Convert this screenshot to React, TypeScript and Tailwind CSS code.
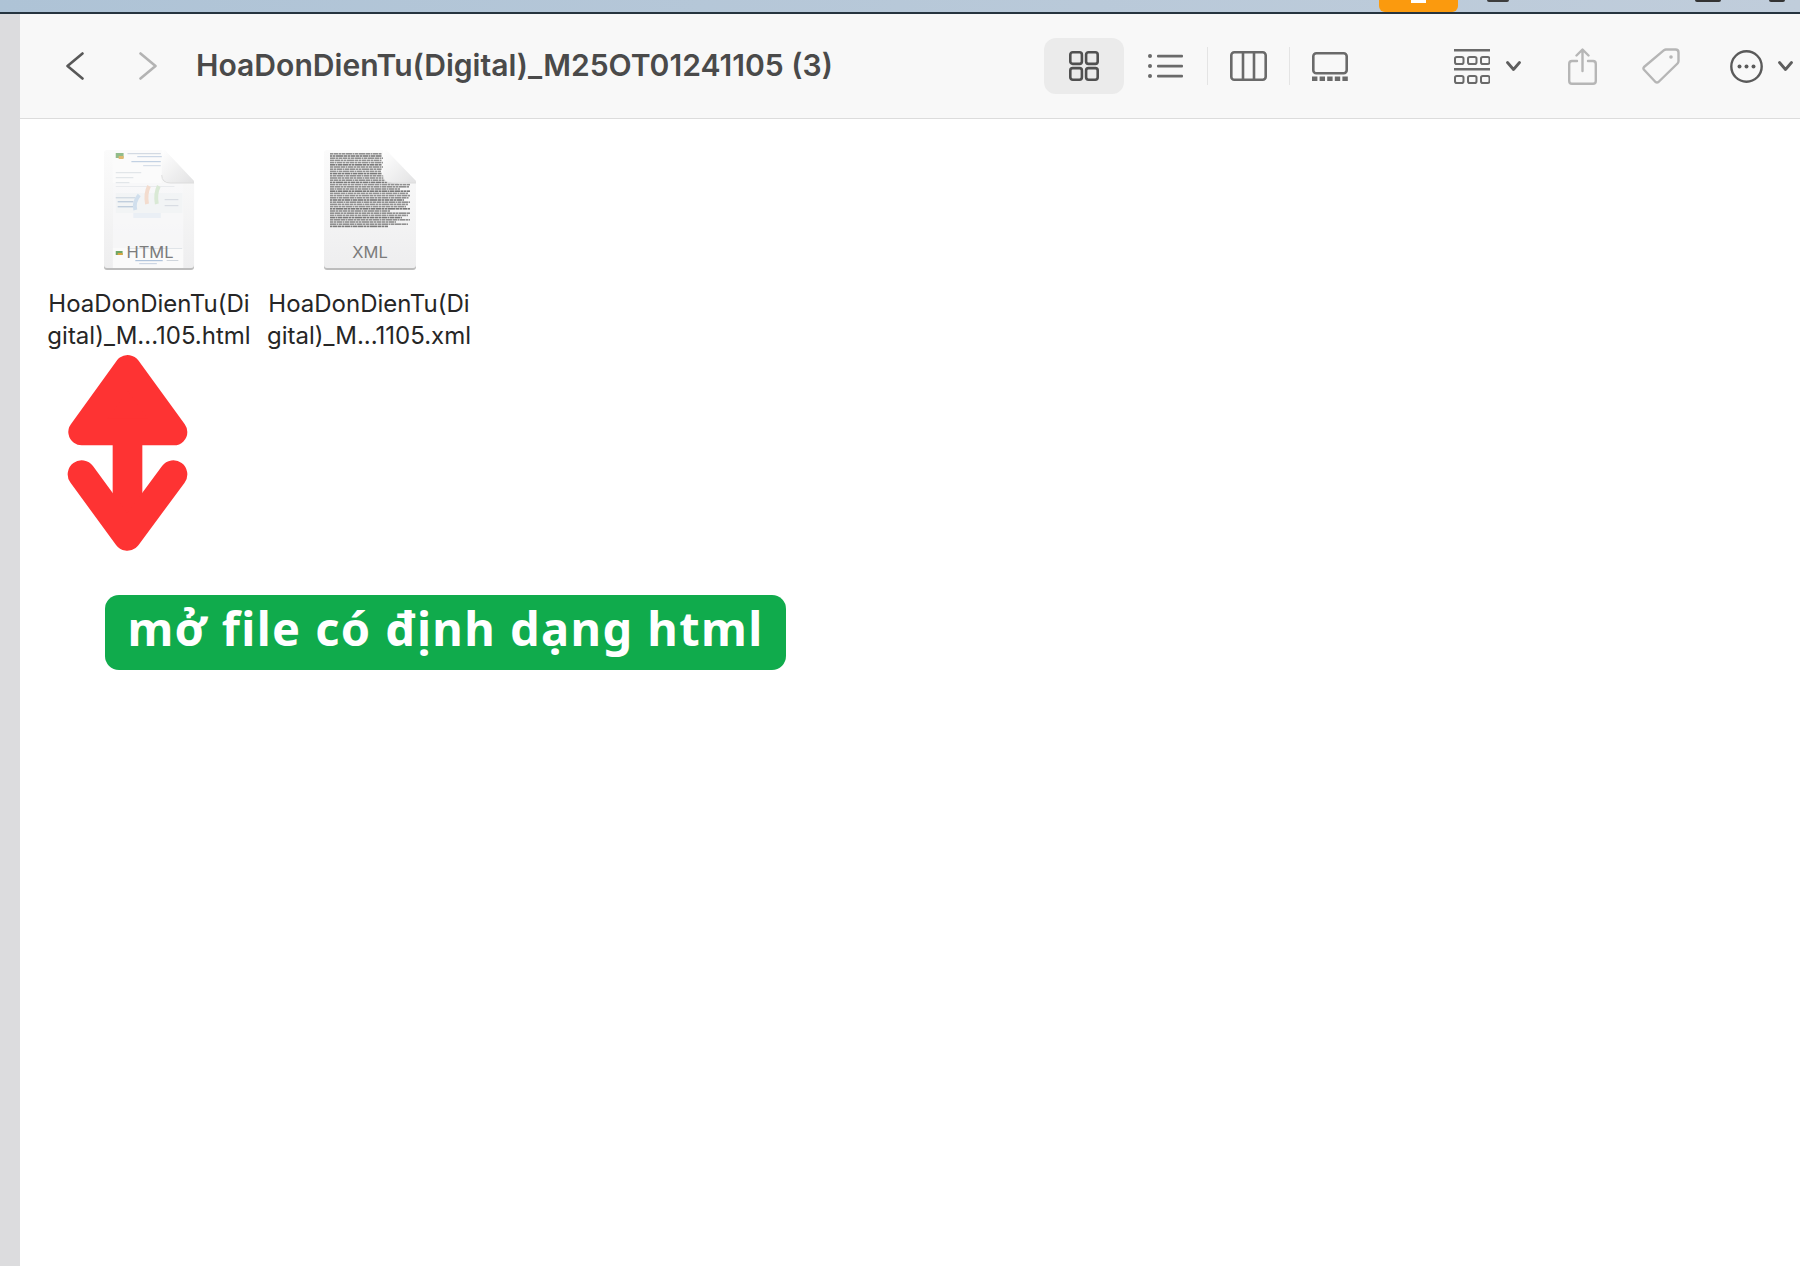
import React from 'react';

// row widths of the tiny text in the xml preview, narrower above the page fold
const xmlRowWidths = [
  52, 52, 53, 52, 53, 52, 53, 52, 51, 52, 53,
  80, 78, 68, 80, 79, 70, 80, 78, 80, 79, 74,
  80, 78, 76, 80, 60, 80, 78, 72, 80, 66, 78, 58,
];

const wordLengths = [3, 5, 2, 4, 6, 2, 3, 7, 4, 2, 5, 3];

const xmlWords = (rowWidth: number, row: number) => {
  const words: { x: number; w: number }[] = [];
  let x = 0;
  let i = row * 5;
  while (x < rowWidth) {
    const w = Math.min(wordLengths[i % wordLengths.length], rowWidth - x);
    words.push({ x, w });
    x += w + 0.5;
    i += 1;
  }
  return words;
};

const PageBase = ({ id }: { id: string }) => (
  <>
    <defs>
      <linearGradient id={id} x1="0" y1="0" x2="0" y2="1">
        <stop offset="0" stopColor="#fbfbfb" />
        <stop offset="1" stopColor="#eeeeef" />
      </linearGradient>
    </defs>
    <path d="M3 0H62L92 31V115Q92 118 89 118H3Q0 118 0 115V3Q0 0 3 0Z" fill="#bdbdbd" transform="translate(0 2)" />
    <path d="M3 0H62L92 31V115Q92 118 89 118H3Q0 118 0 115V3Q0 0 3 0Z" fill={`url(#${id})`} />
  </>
);

const Fold = ({ id }: { id: string }) => (
  <>
    <defs>
      <linearGradient id={`${id}-fold`} x1="0" y1="0" x2="1" y2="1">
        <stop offset="0" stopColor="#ffffff" />
        <stop offset="1" stopColor="#e2e2e3" />
      </linearGradient>
    </defs>
    <path d="M59 0H62L92 31V33H68Q59 33 59 25Z" fill={`url(#${id}-fold)`} />
    <path d="M59 25Q59 33 68 33H92" fill="none" stroke="#dddddd" strokeWidth="1" />
  </>
);

const HtmlFile = () => (
  <div className="relative h-[120px] w-[93px]">
    <svg width="91" height="120" viewBox="0 0 93 120" preserveAspectRatio="none">
      <PageBase id="html-page" />
      <rect x="9" y="0" width="50" height="33" fill="#fbfbfb" />
      <rect x="9" y="33" width="72" height="65" fill="#f8f8f9" opacity="0.7" />
      <g opacity="0.75">
        <rect x="12" y="3" width="8" height="5" fill="#6fa765" />
        <rect x="15" y="6" width="5" height="3" fill="#d9a441" />
        <rect x="24" y="3" width="34" height="1.2" fill="#c6cfdb" />
        <rect x="34" y="6" width="26" height="1.2" fill="#bccce0" />
        <rect x="28" y="11" width="30" height="1.2" fill="#afc3db" />
        <rect x="40" y="15" width="18" height="1.2" fill="#ccd6e4" />
        <rect x="12" y="22" width="26" height="1.2" fill="#dadfe4" />
        <rect x="12" y="27" width="18" height="1.2" fill="#dadfe4" />
        <rect x="12" y="32" width="14" height="1.2" fill="#dadfe4" />
        <rect x="12" y="36" width="60" height="1" fill="#e4e7eb" />
        <rect x="12" y="43" width="68" height="20" fill="#f1f3f5" />
        <rect x="12" y="47" width="20" height="1.4" fill="#c8d2dd" />
        <rect x="14" y="51" width="16" height="1.4" fill="#afc1d4" />
        <rect x="14" y="56" width="16" height="1.4" fill="#afc1d4" />
        <rect x="62" y="49" width="14" height="1.2" fill="#cfd5dc" />
        <rect x="62" y="55" width="14" height="1.2" fill="#cfd5dc" />
        <path d="M36 45Q30 52 32 60" fill="none" stroke="#c5d8ea" strokeWidth="4" />
        <path d="M46 36Q42 44 44 54" fill="none" stroke="#f2d3c0" strokeWidth="4" />
        <path d="M56 36Q52 44 54 54" fill="none" stroke="#d0e5ca" strokeWidth="4" />
        <rect x="30" y="63" width="28" height="5" fill="#e6edf4" />
      </g>
      <Fold id="html-page" />
      <rect x="9" y="98" width="72" height="20" fill="#fafafa" />
      <rect x="12" y="101" width="7" height="4" fill="#6fa765" />
      <rect x="14" y="103" width="5" height="2" fill="#d9a441" />
      <rect x="32" y="110" width="28" height="1.2" fill="#afc3db" />
      <rect x="36" y="113" width="18" height="1.2" fill="#ccd6e4" />
      <rect x="64" y="110" width="12" height="1" fill="#cfd5dc" />
      <rect x="24" y="98" width="56" height="0.8" fill="#dadfe4" />
    </svg>
    <span className="absolute left-0 top-[92px] w-full text-center text-[16.5px] leading-5 text-[#7c7c7c]">HTML</span>
  </div>
);

const XmlFile = () => (
  <div className="relative h-[120px] w-[93px]">
    <svg width="93" height="120" viewBox="0 0 93 120">
      <PageBase id="xml-page" />
      {xmlRowWidths.map((rowWidth, row) =>
        xmlWords(rowWidth, row).map((word) => (
          <rect
            key={`${row}-${word.x}`}
            x={6 + word.x}
            y={3 + row * 2.2}
            width={word.w}
            height="1.6"
            fill={row % 4 === 1 ? '#7a7a7a' : '#909090'}
          />
        )),
      )}
      <Fold id="xml-page" />
    </svg>
    <span className="absolute left-0 top-[92px] w-full text-center text-[16.5px] leading-5 text-[#7c7c7c]">XML</span>
  </div>
);

const FileItem = ({ icon, top, bottom }: { icon: React.ReactNode; top: string; bottom: string }) => (
  <div className="flex w-[220px] flex-col items-center">
    {icon}
    <div className="mt-[18px] pr-[2px] text-center text-[24px] leading-[32px] whitespace-nowrap text-[#262626]">
      <p>{top}</p>
      <p>{bottom}</p>
    </div>
  </div>
);

const Chevron = ({ dir, color }: { dir: 'left' | 'right'; color: string }) => (
  <svg width="18" height="28" viewBox="0 0 18 28" fill="none" stroke={color} strokeWidth="2.6" strokeLinecap="round" strokeLinejoin="round">
    <path d={dir === 'left' ? 'M16.5 1.5L1.5 14L16.5 26.5' : 'M1.5 1.5L16.5 14L1.5 26.5'} />
  </svg>
);

const SmallChevron = () => (
  <svg width="15" height="10" viewBox="0 0 15 10" fill="none" stroke="#5e5e5e" strokeWidth="2.8" strokeLinecap="round" strokeLinejoin="round">
    <path d="M1.5 1.5L7.5 8.5L13.5 1.5" />
  </svg>
);

const GridIcon = () => (
  <svg width="30" height="30" viewBox="0 0 30 30" fill="none" stroke="#505050" strokeWidth="2.6">
    <rect x="1.3" y="1.3" width="11.6" height="11.6" rx="2.4" />
    <rect x="17.1" y="1.3" width="11.6" height="11.6" rx="2.4" />
    <rect x="1.3" y="17.1" width="11.6" height="11.6" rx="2.4" />
    <rect x="17.1" y="17.1" width="11.6" height="11.6" rx="2.4" />
  </svg>
);

const ListIcon = () => (
  <svg width="35" height="24" viewBox="0 0 35 24" fill="#6a6a6a">
    <circle cx="2" cy="2" r="2" />
    <circle cx="2" cy="12" r="2" />
    <circle cx="2" cy="22" r="2" />
    <rect x="9" y="0.8" width="26" height="2.6" rx="1" />
    <rect x="9" y="10.8" width="26" height="2.6" rx="1" />
    <rect x="9" y="20.8" width="26" height="2.6" rx="1" />
  </svg>
);

const ColumnsIcon = () => (
  <svg width="37" height="30" viewBox="0 0 37 30" fill="none" stroke="#6a6a6a" strokeWidth="2.6">
    <rect x="1.3" y="1.3" width="34.4" height="27.4" rx="3" />
    <path d="M13 1.3V28.7M24 1.3V28.7" />
  </svg>
);

const GalleryIcon = () => (
  <svg width="36" height="29" viewBox="0 0 36 29" fill="none">
    <rect x="1.3" y="1.3" width="33.4" height="20" rx="3" stroke="#6a6a6a" strokeWidth="2.6" />
    {[0, 7.6, 15.2, 22.8, 30.4].map((x) => (
      <rect key={x} x={x} y="24.5" width="5.4" height="4.5" fill="#6a6a6a" />
    ))}
  </svg>
);

const GroupIcon = () => (
  <svg width="36" height="35" viewBox="0 0 36 35" fill="none" stroke="#6a6a6a">
    <path d="M0 1.2H36M0 20.2H36" strokeWidth="2.4" />
    {[0, 13, 26].map((x) => (
      <React.Fragment key={x}>
        <rect x={x + 1} y="8" width="8.5" height="7" rx="1.8" strokeWidth="2" />
        <rect x={x + 1} y="27" width="8.5" height="7" rx="1.8" strokeWidth="2" />
      </React.Fragment>
    ))}
  </svg>
);

const ShareIcon = () => (
  <svg width="29" height="37" viewBox="0 0 29 37" fill="none" stroke="#b6b6b6" strokeWidth="2.4" strokeLinecap="round" strokeLinejoin="round">
    <path d="M9 13H4Q1.2 13 1.2 16V33Q1.2 35.8 4 35.8H25Q27.8 35.8 27.8 33V16Q27.8 13 25 13H20" />
    <path d="M14.5 23V2M8.5 7.5L14.5 1.5L20.5 7.5" />
  </svg>
);

const TagIcon = () => (
  <svg width="38" height="36" viewBox="0 0 38 36" fill="none" stroke="#b6b6b6" strokeWidth="2.4" strokeLinejoin="round">
    <path d="M24 1.5H33.5Q36.5 1.5 36.5 4.5V13Q36.5 14.5 35.5 15.5L16.5 34Q15 35 13.5 34L1.8 21.5Q1 20 2 19L22 2.2Q23 1.5 24 1.5Z" />
    <circle cx="29" cy="9" r="1.8" fill="#b6b6b6" stroke="none" />
  </svg>
);

const MoreIcon = () => (
  <svg width="33" height="33" viewBox="0 0 33 33" fill="none">
    <circle cx="16.5" cy="16.5" r="15.2" stroke="#5a5a5a" strokeWidth="2.4" />
    <circle cx="9.5" cy="16.5" r="2" fill="#5a5a5a" />
    <circle cx="16.5" cy="16.5" r="2" fill="#5a5a5a" />
    <circle cx="23.5" cy="16.5" r="2" fill="#5a5a5a" />
  </svg>
);

const RedArrow = () => (
  <svg width="160" height="220" viewBox="0 0 480 660" className="absolute left-[50px] top-[340px]">
    <path d="M233 85L95 276H372Z" fill="#fe3333" stroke="#fe3333" strokeWidth="80" strokeLinejoin="round" />
    <rect x="188" y="300" width="89" height="290" fill="#fe3333" />
    <path d="M95 403L232 590L370 403" fill="none" stroke="#fe3333" strokeWidth="84" strokeLinecap="round" strokeLinejoin="round" />
  </svg>
);

const App = () => {
  return (
    <div className="relative flex h-[1266px] w-[1800px] flex-col overflow-hidden bg-white font-[Inter,sans-serif]">
      <div className="flex h-[14px] shrink-0 items-start border-b-2 border-[#26343f] bg-gradient-to-r from-[#aec3d6] to-[#c0cddb]">
        <div className="ml-[1379px] flex h-[12px] w-[79px] justify-center rounded-b-md bg-[#fb9a0e]">
          <span className="h-[3px] w-[15px] bg-white" />
        </div>
        <span className="ml-[29px] h-[2px] w-[22px] rounded-b bg-[#3d3d3d]" />
        <span className="ml-[186px] h-[2px] w-[26px] rounded-b bg-[#333333]" />
        <span className="ml-[48px] h-[2px] w-[16px] rounded-b bg-[#333333]" />
      </div>

      <div className="flex min-h-0 flex-1">
        <div className="w-[20px] shrink-0 bg-[#dcdcde]" />

        <div className="flex min-w-0 flex-1 flex-col">
          <header className="flex h-[105px] shrink-0 items-center border-b border-[#dcdcdc] bg-[#f8f8f8]">
            <div className="ml-[46px]">
              <Chevron dir="left" color="#585858" />
            </div>
            <div className="ml-[55px]">
              <Chevron dir="right" color="#b3b3b3" />
            </div>
            <h1 className="mb-[2px] ml-[39px] w-[848px] text-[30.1px] leading-9 font-semibold whitespace-nowrap text-[#4a4a4a]">
              HoaDonDienTu(Digital)_M25OT01241105 (3)
            </h1>
            <div className="flex h-[56px] w-[80px] items-center justify-center rounded-xl bg-[#ebebeb]">
              <GridIcon />
            </div>
            <div className="ml-[24px]">
              <ListIcon />
            </div>
            <span className="ml-[24px] h-[38px] w-px bg-[#e4e4e4]" />
            <div className="ml-[22px]">
              <ColumnsIcon />
            </div>
            <span className="ml-[22px] h-[38px] w-px bg-[#e4e4e4]" />
            <div className="ml-[22px]">
              <GalleryIcon />
            </div>
            <div className="ml-[106px]">
              <GroupIcon />
            </div>
            <div className="ml-[16px]">
              <SmallChevron />
            </div>
            <div className="ml-[47px]">
              <ShareIcon />
            </div>
            <div className="ml-[45px]">
              <TagIcon />
            </div>
            <div className="ml-[50px]">
              <MoreIcon />
            </div>
            <div className="ml-[15px]">
              <SmallChevron />
            </div>
          </header>

          <main className="flex flex-1 items-start bg-white pt-[31px] pl-[20px]">
            <FileItem icon={<HtmlFile />} top="HoaDonDienTu(Di" bottom="gital)_M...105.html" />
            <FileItem icon={<XmlFile />} top="HoaDonDienTu(Di" bottom="gital)_M...1105.xml" />
          </main>
        </div>
      </div>

      <RedArrow />
      <div className="absolute left-[105px] top-[595px] flex h-[75px] w-[681px] items-center justify-center rounded-[14px] bg-[#10ab4c] pb-[9px] font-['Noto_Sans',sans-serif] text-[47px] font-bold tracking-[1.4px] whitespace-nowrap text-white">
        mở file có định dạng html
      </div>
    </div>
  );
};

export default App;
